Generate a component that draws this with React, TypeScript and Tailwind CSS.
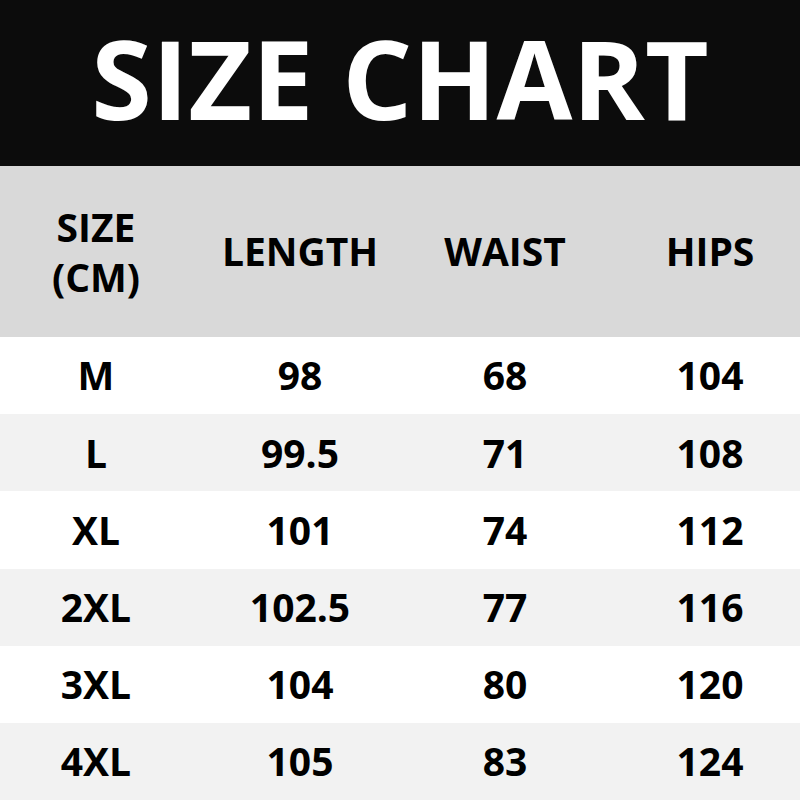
const rows = [
  ["M", "98", "68", "104"],
  ["L", "99.5", "71", "108"],
  ["XL", "101", "74", "112"],
  ["2XL", "102.5", "77", "116"],
  ["3XL", "104", "80", "120"],
  ["4XL", "105", "83", "124"],
];

const font = { fontFamily: '"Open Sans", "Liberation Sans", sans-serif' };

export default function App() {
  return (
    <div className="flex h-[800px] w-[800px] flex-col overflow-hidden bg-white text-black" style={font}>
      {/* Title */}
      <div className="flex h-[166px] items-center justify-center bg-[#0c0c0c]">
        <h1 className="pb-[12px] text-[110px] font-bold leading-none text-white">SIZE CHART</h1>
      </div>

      {/* Column headers */}
      <div className="grid h-[171px] grid-cols-[192px_216px_194px_1fr] items-center bg-[#d9d9d9] text-[39px] font-bold">
        <div className="text-center leading-[50px]">
          SIZE
          <br />
          (CM)
        </div>
        <div className="text-center">LENGTH</div>
        <div className="text-center">WAIST</div>
        <div className="pl-[18px] text-center">HIPS</div>
      </div>

      {/* Data rows */}
      {rows.map((r, i) => (
        <div
          key={r[0]}
          className={`grid flex-1 grid-cols-[192px_216px_194px_1fr] items-center text-[39px] font-bold ${
            i % 2 === 1 ? "bg-[#f2f2f2]" : "bg-white"
          }`}
        >
          <div className="text-center">{r[0]}</div>
          <div className="text-center">{r[1]}</div>
          <div className="text-center">{r[2]}</div>
          <div className="pl-[18px] text-center">{r[3]}</div>
        </div>
      ))}
    </div>
  );
}
